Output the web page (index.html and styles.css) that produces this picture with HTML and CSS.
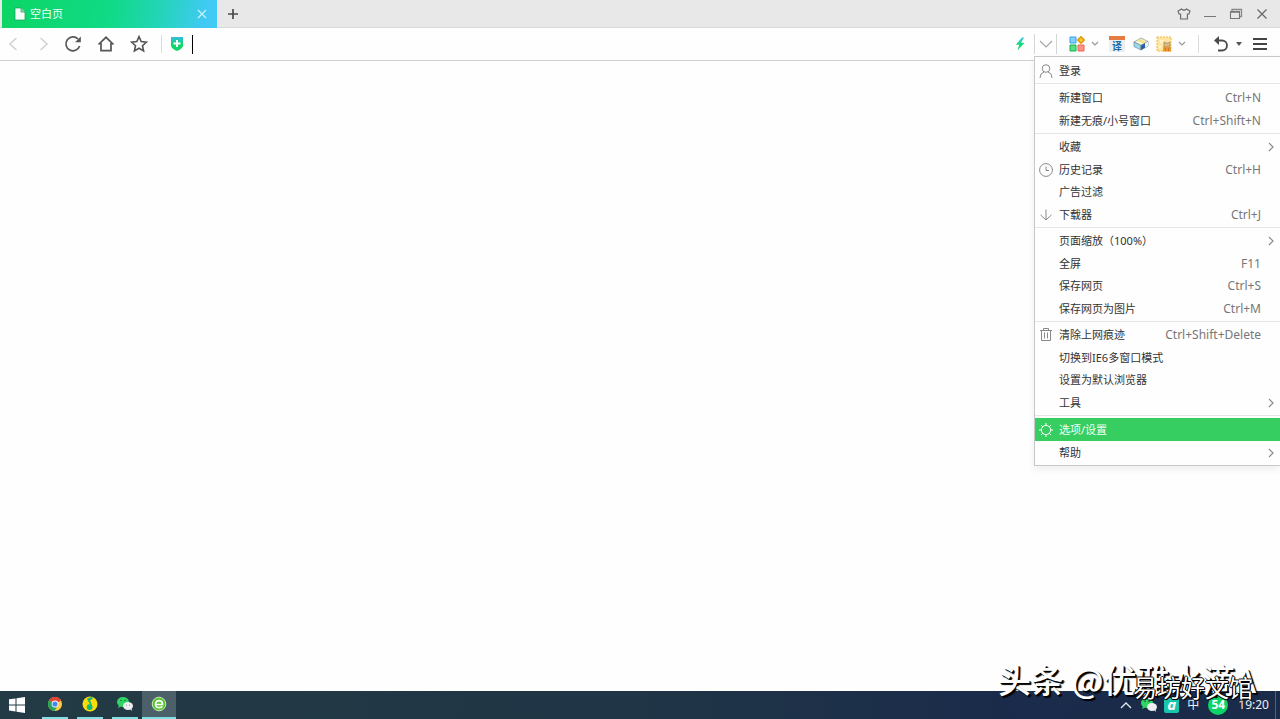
FILE: index.html
```html
<!DOCTYPE html>
<html lang="zh-CN">
<head>
<meta charset="utf-8">
<title>空白页</title>
<link rel="stylesheet" href="styles.css">
</head>
<body>
<header class="tabs">
  <div class="tab">
    <svg class="doc" width="12" height="14" viewBox="0 0 12 14"><path d="M1 1h6l4 4v8H1z" fill="#f4fff8" stroke="#139b53" stroke-width=".7"/><path d="M7 1v4h4" fill="#a8d8bc" stroke="#139b53" stroke-width=".7"/></svg>
    <span class="tab-title">空白页</span>
    <button class="btn tab-close" aria-label="关闭标签"><svg width="10" height="10" viewBox="0 0 10 10"><path d="M1 1l8 8M9 1L1 9" stroke="#c9f3f5" stroke-width="1.2"/></svg></button>
  </div>
  <button class="btn new-tab" aria-label="新标签"><svg width="10" height="10" viewBox="0 0 10 10"><path d="M5 0v10M0 5h10" stroke="#4a4a4a" stroke-width="1.7"/></svg></button>
  <div class="window-buttons">
    <button class="btn" aria-label="皮肤"><svg width="14" height="12" viewBox="0 0 14 12"><path d="M4.5 1L1 3l1 3h1.600v5h6.800V6H12l1-3-3.500-2Q7 3.200 4.500 1z" fill="none" stroke="#666" stroke-width="1.1"/></svg></button>
    <button class="btn" aria-label="最小化"><svg width="12" height="12" viewBox="0 0 12 12"><path d="M0 8.500h12" stroke="#777" stroke-width="1"/></svg></button>
    <button class="btn" aria-label="还原"><svg width="14" height="12" viewBox="0 0 14 12"><path d="M3 3V1.500h9.500v7H11" fill="none" stroke="#888" stroke-width="1.3"/><path d="M1.500 3.500h9v7h-9z" fill="none" stroke="#777" stroke-width="1.1"/><path d="M1 4h10" stroke="#777" stroke-width="1.500"/></svg></button>
    <button class="btn" aria-label="关闭"><svg width="12" height="12" viewBox="0 0 12 12"><path d="M1.500 1.500l9 9M10.500 1.500l-9 9" stroke="#666" stroke-width="1.2"/></svg></button>
  </div>
</header>
<nav class="toolbar">
  <div class="nav-buttons">
    <button class="btn" aria-label="后退"><svg width="10" height="14" viewBox="0 0 10 14"><path d="M8.500 1L2 7l6.500 6" fill="none" stroke="#d2d2d2" stroke-width="1.600"/></svg></button>
    <button class="btn" aria-label="前进"><svg width="10" height="14" viewBox="0 0 10 14"><path d="M1.500 1L8 7l-6.500 6" fill="none" stroke="#d2d2d2" stroke-width="1.600"/></svg></button>
    <button class="btn" aria-label="刷新"><svg width="18" height="18" viewBox="0 0 18 18"><path d="M15.600 11A7 7 0 1 1 14 4" fill="none" stroke="#555" stroke-width="1.700"/><path d="M16.800 1.500v5.700h-5.700z" fill="#555"/></svg></button>
    <button class="btn" aria-label="主页"><svg width="18" height="18" viewBox="0 0 18 18"><path d="M1.500 9.500L9 2.300l7.500 7.200M4 8v7.700h10V8" fill="none" stroke="#555" stroke-width="1.700"/></svg></button>
    <button class="btn" aria-label="收藏"><svg width="18" height="18" viewBox="0 0 18 18"><path d="M9 1.600l2.200 4.900 5.300.6-4 3.600 1.100 5.300L9 13.300 4.400 16l1.100-5.300-4-3.600 5.300-.6z" fill="none" stroke="#555" stroke-width="1.600"/></svg></button>
  </div>
  <i class="rule"></i>
  <svg class="shield" width="14" height="14" viewBox="0 0 14 14"><defs><linearGradient id="sh" x2="0" y2="1"><stop stop-color="#36bce6"/><stop offset=".5" stop-color="#0fd56d"/></linearGradient></defs><path d="M1 0h12v9q-1 3-6 5-5-2-6-5z" fill="url(#sh)"/><path d="M7 3v7M3.500 6.500h7" stroke="#fff" stroke-width="2"/></svg>
  <i class="caret"></i>
  <input class="address" aria-label="地址">
  <div class="tools">
    <button class="btn bolt" aria-label="极速模式"><svg width="10" height="14" viewBox="0 0 10 14"><defs><linearGradient id="bo" x2="0" y2="1"><stop stop-color="#33c6df"/><stop offset=".6" stop-color="#13db6b"/></linearGradient></defs><path d="M7 .5L.8 7.800h3.400L2.500 13.500 9.500 5.800H6L9 .5z" fill="url(#bo)"/></svg></button>
    <button class="btn boxed" aria-label="展开地址"><svg width="14" height="8" viewBox="0 0 14 8"><path d="M1 1l6 6 6-6" fill="none" stroke="#a7a7a7" stroke-width="1.200"/></svg></button>
    <button class="btn apps" aria-label="扩展"><svg width="16" height="16" viewBox="0 0 16 16"><path d="M1 1h6v6H1z" fill="#81ceff" stroke="#35a2e7"/><path d="M1 9h6v6H1z" fill="#5add83" stroke="#11b64a"/><path d="M9 9h6v6H9z" fill="#ff9284" stroke="#ed6459"/><path d="M12 .7L15.300 4 12 7.300 8.700 4z" fill="#ffc735" stroke="#dc9700" stroke-width="1.400"/></svg></button>
    <button class="btn more" aria-label="更多扩展"><svg width="8" height="6" viewBox="0 0 8 6"><path d="M1 1l3 3 3-3" fill="none" stroke="#999" stroke-width="1.200"/></svg></button>
    <button class="btn translate" aria-label="翻译"><span>译</span></button>
    <button class="btn eraser" aria-label="清理"><svg width="16" height="14" viewBox="0 0 16 14"><path d="M1 5l7-4 7 3.500-7 4z" fill="#f6f6df" stroke="#888" stroke-width=".7"/><path d="M4 3.500l3-1.700 7 3.500-3 1.700z" fill="#eee58d"/><path d="M1 5l7 3.500V13L1 9.500z" fill="#9bdbea" stroke="#6688a0" stroke-width=".7"/><path d="M8 8.500l7-4V9l-7 4z" fill="#245da8" stroke="#607083" stroke-width=".7"/><path d="M12 6.300l3-1.800V9l-3 1.700z" fill="#eef5ff"/></svg></button>
    <button class="btn snap" aria-label="截图"><svg width="16" height="16" viewBox="0 0 16 16"><path d="M1 1h14v14H1z" fill="#ffe6a1" stroke="#f2b84d" stroke-dasharray="2 1"/><path d="M4 4h3v3H4zM3 10h2v2H3z" fill="#fff4cb"/><path d="M8 6l2 1h2l2-1v5H8z" fill="#d9bd82" stroke="#8b765d" stroke-width=".6"/><path d="M7 11h8v4.500H7z" fill="#ee9832"/><path d="M9.500 12v3M12.500 12v3" stroke="#b96d2d" stroke-width=".7"/></svg></button>
    <button class="btn more" aria-label="更多工具"><svg width="8" height="6" viewBox="0 0 8 6"><path d="M1 1l3 3 3-3" fill="none" stroke="#999" stroke-width="1.200"/></svg></button>
    <i class="rule"></i>
    <button class="btn undo" aria-label="恢复"><svg width="16" height="16" viewBox="0 0 16 16"><path d="M4 4.500h5a5 5 0 0 1 0 10H5" fill="none" stroke="#4a4a4a" stroke-width="1.800"/><path d="M1 4.500L6 0v9z" fill="#4a4a4a"/></svg></button>
    <button class="btn drop" aria-label="恢复列表"><svg width="6" height="4" viewBox="0 0 6 4"><path d="M0 0h6L3 4z" fill="#555"/></svg></button>
    <button class="btn burger" aria-label="菜单"><svg width="14" height="12" viewBox="0 0 14 12"><path d="M0 1h14M0 6h14M0 11h14" stroke="#444" stroke-width="1.800"/></svg></button>
  </div>
</nav>
<main class="page">
  <div class="menu">
    <div class="group single">
      <button class="item"><svg class="mi" viewBox="0 0 14 14"><circle cx="7" cy="4.500" r="3.800"/><path d="M1 14q0-5 4-6M13 14q0-5-4-6"/></svg><span>登录</span></button>
    </div>
    <div class="group pair">
      <button class="item"><i class="mi"></i><span>新建窗口</span><kbd>Ctrl+N</kbd></button>
      <button class="item"><i class="mi"></i><span>新建无痕/小号窗口</span><kbd>Ctrl+Shift+N</kbd></button>
    </div>
    <div class="group">
      <button class="item"><i class="mi"></i><span>收藏</span><svg class="sub" viewBox="0 0 6 10"><path d="M1 1l4 4-4 4"/></svg></button>
      <button class="item"><svg class="mi" viewBox="0 0 14 14"><circle cx="7" cy="7" r="6.400"/><path d="M7 3.500v4h3"/></svg><span>历史记录</span><kbd>Ctrl+H</kbd></button>
      <button class="item"><i class="mi"></i><span>广告过滤</span></button>
      <button class="item"><svg class="mi" viewBox="0 0 14 14"><path d="M7 1.500V12M1.500 6.800L7 12l5.500-5.200"/></svg><span>下载器</span><kbd>Ctrl+J</kbd></button>
    </div>
    <div class="group">
      <button class="item"><i class="mi"></i><span>页面缩放（100%）</span><svg class="sub" viewBox="0 0 6 10"><path d="M1 1l4 4-4 4"/></svg></button>
      <button class="item"><i class="mi"></i><span>全屏</span><kbd>F11</kbd></button>
      <button class="item"><i class="mi"></i><span>保存网页</span><kbd>Ctrl+S</kbd></button>
      <button class="item"><i class="mi"></i><span>保存网页为图片</span><kbd>Ctrl+M</kbd></button>
    </div>
    <div class="group">
      <button class="item"><svg class="mi" viewBox="0 0 14 14"><path d="M1 2.500h12M4.500 2.500v-2h5v2M2.500 2.500v10h9v-10M5.500 4.500v6M8.500 4.500v6"/></svg><span>清除上网痕迹</span><kbd>Ctrl+Shift+Delete</kbd></button>
      <button class="item"><i class="mi"></i><span>切换到IE6多窗口模式</span></button>
      <button class="item"><i class="mi"></i><span>设置为默认浏览器</span></button>
      <button class="item"><i class="mi"></i><span>工具</span><svg class="sub" viewBox="0 0 6 10"><path d="M1 1l4 4-4 4"/></svg></button>
    </div>
    <div class="group pair">
      <button class="item active"><svg class="mi" viewBox="0 0 14 14"><circle cx="7" cy="7" r="4.600"/><path d="M7 0v2.400M7 11.600V14M0 7h2.400M11.600 7H14M2 2l1.700 1.700M10.300 10.300L12 12M2 12l1.700-1.700M10.300 3.700L12 2"/></svg><span>选项/设置</span></button>
      <button class="item"><i class="mi"></i><span>帮助</span><svg class="sub" viewBox="0 0 6 10"><path d="M1 1l4 4-4 4"/></svg></button>
    </div>
  </div>
</main>
<footer class="taskbar">
  <button class="btn start" aria-label="开始"><svg width="16" height="16" viewBox="0 0 16 16"><path d="M0 2.300l6.500-.9v6H0zM7.500 1.200L16 0v7.400H7.500zM0 8.500h6.500v6L0 13.600zM7.500 8.500H16V16l-8.500-1.200z" fill="#fff"/></svg></button>
  <button class="btn app" aria-label="Chrome"><svg width="14" height="14" viewBox="0 0 14 14"><circle cx="7" cy="7" r="7" fill="#ffcd40"/><path d="M7 7L.9 3.500A7 7 0 0 1 13.100 3.500z" fill="#e34133"/><path d="M7 7L.9 3.500A7 7 0 0 0 6.500 14L9.800 8.600z" fill="#25a45b"/><circle cx="7" cy="7" r="3.400" fill="#fff"/><circle cx="7" cy="7" r="2.600" fill="#4286f5"/></svg></button>
  <button class="btn app" aria-label="音乐"><svg width="16" height="16" viewBox="0 0 16 16"><circle cx="8" cy="8" r="7.500" fill="#fedc09"/><path d="M5 2.500L10.500.8v2.400L8 4l2.500 6.500a2.900 2.900 0 1 1-2.500-2.300L5.500 4z" fill="#12b978"/></svg></button>
  <button class="btn app" aria-label="微信"><svg width="16" height="14" viewBox="0 0 16 14"><ellipse cx="6" cy="5" rx="6" ry="5" fill="#31d566"/><path d="M2 8l-1 3 4-2z" fill="#31d566"/><ellipse cx="11" cy="9" rx="5" ry="4" fill="#eee"/><path d="M13 12l2 2-.5-3z" fill="#eee"/><circle cx="4" cy="3.500" r=".7" fill="#155f2f"/><circle cx="8" cy="3.500" r=".7" fill="#155f2f"/><circle cx="9.500" cy="8" r=".6" fill="#888"/><circle cx="12.500" cy="8" r=".6" fill="#888"/></svg></button>
  <button class="btn app current" aria-label="浏览器"><svg width="16" height="16" viewBox="0 0 16 16"><circle cx="8" cy="8" r="6.800" fill="#54c72d" stroke="#cbe9b6"/><path d="M4.500 8.500h7Q11.500 4.700 8.200 4.700 4.700 4.800 4.500 8.200q.2 3.500 3.800 3.500 2 0 3-1.500" fill="none" stroke="#fff" stroke-width="1.700"/></svg></button>
  <div class="tray">
    <button class="btn" aria-label="显示隐藏的图标"><svg width="12" height="8" viewBox="0 0 12 8"><path d="M1 7l5-5 5 5" fill="none" stroke="#e5e9ee" stroke-width="1.300"/></svg></button>
    <button class="btn" aria-label="微信消息"><svg width="16" height="14" viewBox="0 0 16 14"><ellipse cx="6" cy="5" rx="6" ry="5" fill="#31d566"/><path d="M2 8l-1 3 4-2z" fill="#31d566"/><ellipse cx="11" cy="9" rx="5" ry="4" fill="#eee"/><path d="M13 12l2 2-.5-3z" fill="#eee"/><circle cx="4" cy="3.500" r=".7" fill="#155f2f"/><circle cx="8" cy="3.500" r=".7" fill="#155f2f"/></svg></button>
    <span class="tile">a</span>
    <span class="ime">中</span>
    <span class="score">54</span>
    <time class="clock">19:20</time>
    <i class="desktop-edge"></i>
  </div>
</footer>
<div class="mark-large">头条 @优雅水滴A</div>
<div class="mark-small">易坊好文馆</div>
</body>
</html>
```
FILE: styles.css
```css
* { box-sizing: border-box; }
body {
  position: relative;
  display: flex;
  flex-direction: column;
  min-height: 100vh;
  margin: 0;
  overflow: hidden;
  background: #fefefe;
  color: #333;
  font: 12px/16px "Noto Sans", "Noto Sans CJK SC", sans-serif;
}
svg { display: block; flex: none; }
.btn {
  display: flex;
  align-items: center;
  justify-content: center;
  flex: none;
  padding: 0;
  border: 0;
  background: none;
  color: inherit;
  font: inherit;
}
.tabs {
  display: flex;
  height: 28px;
  padding-left: 2px;
  border-bottom: 1px solid #d8d8d8;
  background: #e8e8e8;
}
.tab {
  display: flex;
  align-items: center;
  width: 215px;
  height: 28px;
  padding: 0 10px 0 12px;
  background: linear-gradient(100deg, #0cd563 0%, #10da86 50%, #22d5b5 72%, #40caf4 94%);
  color: #effff5;
}
.tab-title { flex: 1; padding-left: 4px; font-size: 11px; }
.new-tab { width: 32px; }
.window-buttons { display: flex; gap: 13px; margin-left: auto; padding-right: 12px; }
.toolbar {
  display: flex;
  align-items: center;
  height: 33px;
  border-bottom: 1px solid #cfcfcf;
  background: #fefefe;
}
.nav-buttons { display: flex; align-items: center; gap: 15px; padding-left: 8px; }
.nav-buttons .btn:nth-child(2) { margin-left: 6px; }
.rule { width: 1px; height: 18px; background: #ddd; }
.nav-buttons + .rule { margin-left: 13px; }
.shield { margin-left: 8px; }
.caret { width: 1px; height: 19px; margin-left: 8px; background: #000; }
.address { flex: 1; min-width: 0; height: 26px; border: 0; outline: 0; background: none; }
.tools { display: flex; align-items: center; }
.bolt { width: 28px; }
.boxed { width: 23px; height: 20px; border: solid #d5d5d5; border-width: 0 1px; }
.apps { margin-left: 12px; }
.more { width: 20px; }
.translate {
  width: 16px;
  height: 16px;
  margin-left: 4px;
  border-top: 4px solid #e77c42;
  background: #eee;
  color: #176caa;
  font-size: 10px;
  font-weight: 700;
  line-height: 12px;
}
.eraser { margin-left: 8px; }
.snap { margin-left: 7px; }
.tools .rule { margin: 0 14px 0 6px; }
.drop { width: 20px; }
.burger { margin: 0 13px 0 4px; }
.page { position: relative; flex: 1; }
.menu {
  position: absolute;
  z-index: 2;
  top: -5px;
  right: 0;
  width: 246px;
  border: solid #c8c8c8;
  border-width: 1px 0 1px 1px;
  background: #fefefe;
  box-shadow: 0 3px 8px #0001;
}
.group {
  display: flex;
  flex-direction: column;
  min-height: 94px;
  padding: 2px 0 1px;
  border-bottom: 1px solid #e5e5e5;
}
.single { min-height: 27px; }
.pair { min-height: 50px; }
.group:last-child { min-height: 49px; border: 0; }
.item {
  display: flex;
  align-items: center;
  flex: 1;
  padding: 0 6px 0 4px;
  border: 0;
  background: none;
  color: #333;
  font: inherit;
  font-size: 11px;
  text-align: left;
}
.item > span { flex: 1; padding-left: 6px; white-space: nowrap; }
.active { background: #36ce60; color: #f0fff4; }
.mi { width: 14px; height: 14px; fill: none; stroke: #888; stroke-width: 1; }
.active .mi { stroke: #fff; }
.sub { width: 6px; height: 10px; fill: none; stroke: #888; stroke-width: 1.2; }
kbd { padding-right: 13px; color: #777; font: inherit; font-size: 12px; }
.taskbar {
  display: flex;
  height: 28px;
  background: linear-gradient(90deg, #233b44, #203546 50%, #1a2b4b 80%, #1b2c4a);
  color: #edf1f6;
}
.start { width: 34px; margin-right: 8px; }
.app { width: 26px; margin-right: 9px; border-bottom: 2px solid #82dee5; }
.app:nth-child(4) { margin-right: 4px; }
.current { width: 34px; background: #4c606a; }
.tray { display: flex; align-items: center; margin-left: auto; }
.tray .btn { margin-right: 9px; }
.tray .btn + .btn { margin-right: 7px; }
.tile {
  width: 15px;
  height: 15px;
  border-radius: 2px;
  background: #17c6ad;
  color: #fff;
  font-size: 15px;
  font-style: italic;
  font-weight: 700;
  line-height: 13px;
  text-align: center;
}
.ime { margin-left: 8px; }
.score {
  width: 20px;
  height: 20px;
  margin: 0 10px 0 9px;
  border-radius: 50%;
  background: #0bd366;
  color: #fff;
  font-weight: 700;
  line-height: 20px;
  text-align: center;
}
.desktop-edge { width: 1px; height: 28px; margin: 0 4px 0 6px; background: #526079; }
.mark-large, .mark-small {
  position: absolute;
  z-index: 3;
  color: #fff;
  white-space: nowrap;
  pointer-events: none;
}
.mark-large {
  right: 24px;
  bottom: 20px;
  font: 500 33px/40px "Noto Sans CJK SC", sans-serif;
  text-shadow: 1px 1px 0 #000, 2px 2px 1px #000;
}
.mark-small {
  right: 27px;
  bottom: 17px;
  font: 24px/30px "Noto Sans CJK SC", sans-serif;
  text-shadow: -1px 0 #000, 1px 0 #000, 0 -1px #000, 0 1px #000, 1px 1px #000;
}
```
